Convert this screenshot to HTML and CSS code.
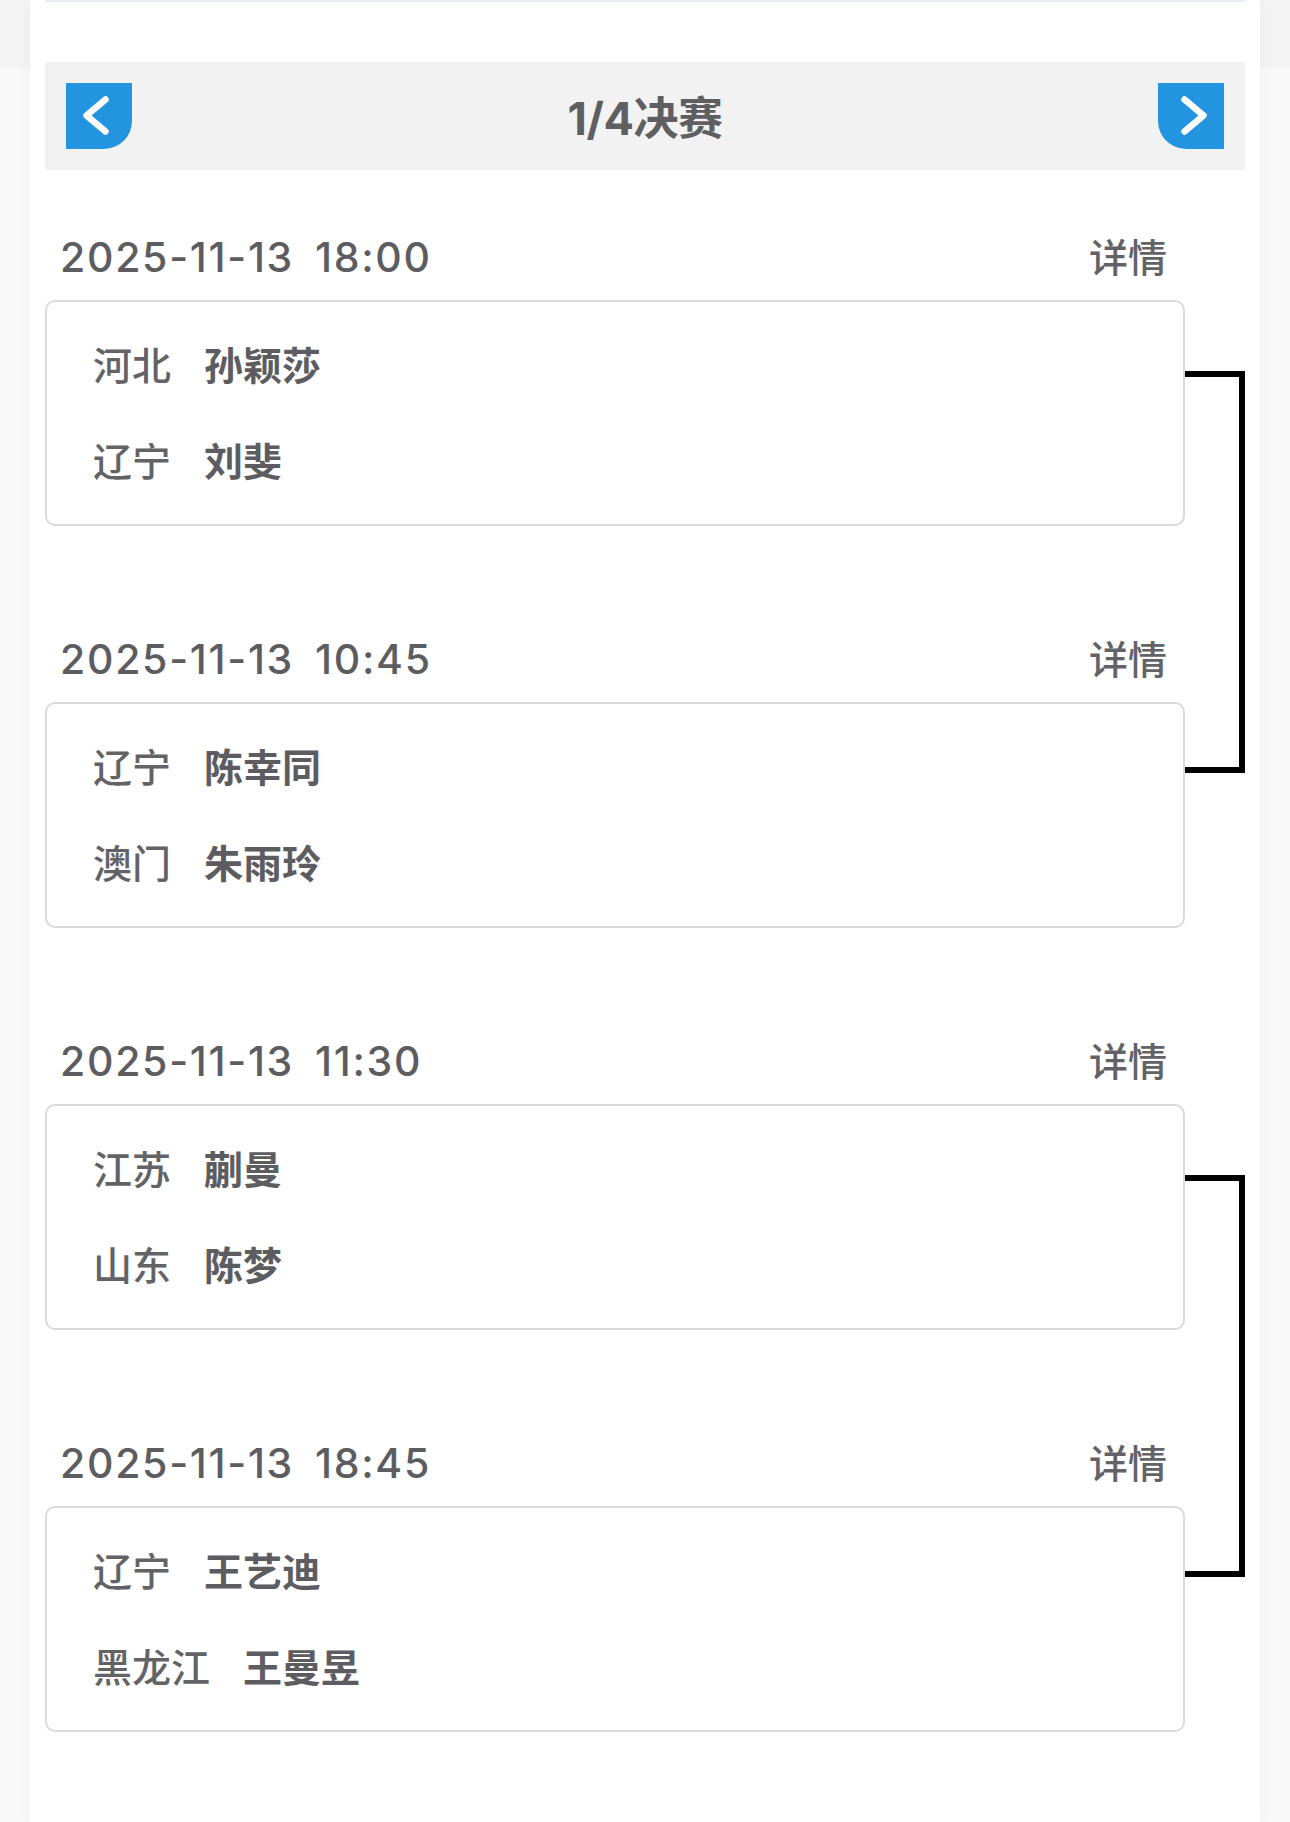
FILE: index.html
```html
<!DOCTYPE html>
<html lang="zh-CN">
<head>
<meta charset="utf-8">
<title>1/4决赛</title>
<link rel="stylesheet" href="styles.css">
</head>
<body>
<div class="card">
  <div class="topline"></div>
  <div class="round-bar">
    <button class="nav nav-prev" aria-label="上一轮">
      <svg viewBox="0 0 66 66" width="66" height="66"><polyline points="39.5,16.5 20.5,32.5 39.5,48.5" /></svg>
    </button>
    <div class="round-title">1/4决赛</div>
    <button class="nav nav-next" aria-label="下一轮">
      <svg viewBox="0 0 66 66" width="66" height="66"><polyline points="26.5,16.5 45.5,32.5 26.5,48.5" /></svg>
    </button>
  </div>

  <div class="bracket">
    <div class="pair">
      <div class="match">
        <div class="match-head"><span class="time">2025-11-13<span class="gap"></span>18:00</span><span class="detail">详情</span></div>
        <div class="match-box">
          <div class="player"><span class="prov">河北</span><span class="name">孙颖莎</span></div>
          <div class="player"><span class="prov">辽宁</span><span class="name">刘斐</span></div>
        </div>
      </div>
      <div class="match">
        <div class="match-head"><span class="time">2025-11-13<span class="gap"></span>10:45</span><span class="detail">详情</span></div>
        <div class="match-box">
          <div class="player"><span class="prov">辽宁</span><span class="name">陈幸同</span></div>
          <div class="player"><span class="prov">澳门</span><span class="name">朱雨玲</span></div>
        </div>
      </div>
      <span class="connector"></span>
    </div>

    <div class="pair">
      <div class="match">
        <div class="match-head"><span class="time">2025-11-13<span class="gap"></span>11:30</span><span class="detail">详情</span></div>
        <div class="match-box">
          <div class="player"><span class="prov">江苏</span><span class="name">蒯曼</span></div>
          <div class="player"><span class="prov">山东</span><span class="name">陈梦</span></div>
        </div>
      </div>
      <div class="match">
        <div class="match-head"><span class="time">2025-11-13<span class="gap"></span>18:45</span><span class="detail">详情</span></div>
        <div class="match-box">
          <div class="player"><span class="prov">辽宁</span><span class="name">王艺迪</span></div>
          <div class="player"><span class="prov">黑龙江</span><span class="name">王曼昱</span></div>
        </div>
      </div>
      <span class="connector"></span>
    </div>
  </div>
</div>
</body>
</html>
```

FILE: styles.css
```css
html, body {
  margin: 0;
  padding: 0;
}

body {
  background: linear-gradient(#f3f3f3 0, #f3f3f3 68px, #f8f8f8 68px);
  font-family: "Noto Sans CJK SC", "Noto Sans", sans-serif;
  color: #5f5f63;
  min-height: 1822px;
}

.card {
  margin: 0 30px;
  padding: 0 15px;
  background: #ffffff;
  min-height: 1822px;
  box-shadow: 0 0 14px rgba(0, 0, 0, 0.035);
}

.topline {
  height: 2px;
  background: #e8ecf3;
}

.round-bar {
  margin-top: 60px;
  height: 108px;
  background: #f2f2f2;
  display: flex;
  align-items: center;
  justify-content: space-between;
  padding: 0 21px;
}

.nav {
  width: 66px;
  height: 66px;
  padding: 0;
  border: none;
  background: #2395e0;
  display: flex;
  align-items: center;
  justify-content: center;
}

.nav svg {
  display: block;
}

.nav polyline {
  fill: none;
  stroke: #ffffff;
  stroke-width: 6.5;
  stroke-linecap: round;
  stroke-linejoin: round;
}

.nav-prev {
  border-radius: 0 0 28px 0;
}

.nav-next {
  border-radius: 0 0 0 28px;
}

.round-title {
  font-family: "Inter", "Noto Sans CJK SC", sans-serif;
  font-size: 45px;
  font-weight: 700;
  color: #5f5f61;
  letter-spacing: -0.5px;
  padding-bottom: 2px;
}

.bracket {
  margin-top: 44px;
}

.pair {
  position: relative;
}

.match {
  width: 1140px;
  margin-bottom: 90px;
}

.match-head {
  height: 86px;
  display: flex;
  align-items: center;
  justify-content: space-between;
  padding: 0 18px 0 15px;
}

.time {
  font-family: "Inter", "Noto Sans", sans-serif;
  font-size: 41px;
  font-weight: 500;
  letter-spacing: 1.7px;
  color: #5d5d61;
  display: flex;
  align-items: center;
}

.gap {
  display: inline-block;
  width: 21px;
}

.detail {
  font-size: 39px;
  font-weight: 500;
  color: #636367;
  padding-bottom: 4px;
}

.match-box {
  height: 226px;
  box-sizing: border-box;
  border: 2px solid #dadada;
  border-radius: 10px;
  padding: 13px 0 17px 46px;
}

.player {
  height: 96px;
  display: flex;
  align-items: center;
  font-size: 39px;
}

.prov {
  font-weight: 500;
  color: #636367;
  margin-right: 33px;
}

.name {
  font-weight: 700;
  color: #5d5d61;
}

.connector {
  position: absolute;
  left: 1140px;
  top: 157px;
  width: 60px;
  height: 402px;
  box-sizing: border-box;
  border: 6px solid #000000;
  border-left: none;
}
```
